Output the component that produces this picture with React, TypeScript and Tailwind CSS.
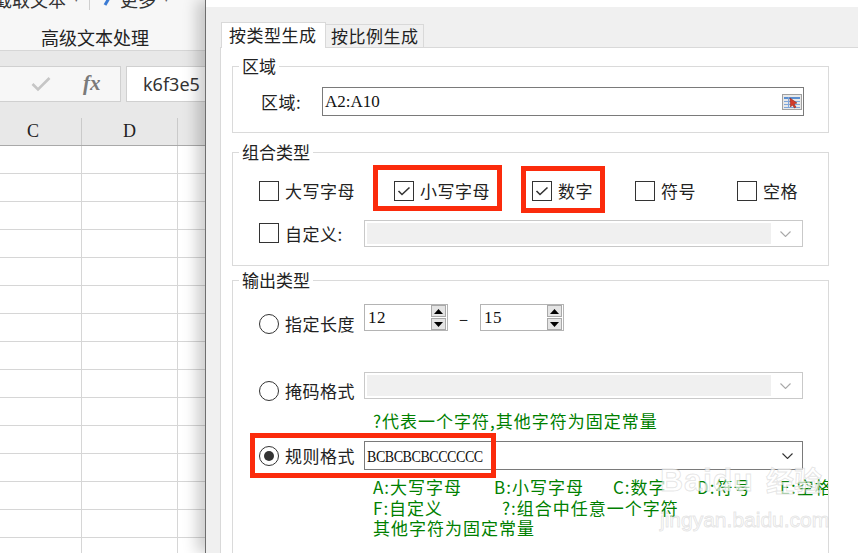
import React from "react";

const Check = ({ checked = false }: { checked?: boolean }) => (
  <span className="w-[20px] h-[20px] shrink-0 border border-[#333] bg-white flex items-center justify-center">
    {checked && (
      <svg width="14" height="12" viewBox="0 0 14 12">
        <path d="M1.5 6 L5 9.5 L12.5 2.5" stroke="#333" strokeWidth="1.6" fill="none" />
      </svg>
    )}
  </span>
);

const Radio = ({ checked = false }: { checked?: boolean }) => (
  <span className="w-[20px] h-[20px] shrink-0 rounded-full border border-[#333] bg-white flex items-center justify-center">
    {checked && <span className="w-[10px] h-[10px] rounded-full bg-[#333]" />}
  </span>
);

const Chevron = ({ color }: { color: string }) => (
  <svg width="11" height="6" viewBox="0 0 11 6">
    <path d="M0.5 0.5 L5.5 5.5 L10.5 0.5" stroke={color} strokeWidth="1.1" fill="none" />
  </svg>
);

const Spin = ({ value }: { value: string }) => (
  <div className="w-[84px] h-[27px] shrink-0 border border-[#b4b4b4] bg-white flex items-center pl-[3px] pr-[1px]">
    <span className="flex-1 text-[17px] font-['Liberation_Serif',serif] text-[#111]">{value}</span>
    <div className="flex flex-col gap-[1px]">
      <div className="w-[15px] h-[12px] border border-[#a9a9a9] bg-[#e4e4e4] flex items-center justify-center">
        <svg width="9" height="5" viewBox="0 0 9 5">
          <path d="M0 5 L4.5 0 L9 5Z" fill="#000" />
        </svg>
      </div>
      <div className="w-[15px] h-[12px] border border-[#a9a9a9] bg-[#e4e4e4] flex items-center justify-center">
        <svg width="9" height="5" viewBox="0 0 9 5">
          <path d="M0 0 L4.5 5 L9 0Z" fill="#000" />
        </svg>
      </div>
    </div>
  </div>
);

const DisabledCombo = () => (
  <div className="flex-1 min-w-0 h-[27px] border border-[#c9c9c9] bg-white flex items-center p-[2px]">
    <div className="h-full flex-1 bg-[#f0f0f0]" />
    <div className="w-[29px] flex justify-center">
      <Chevron color="#a8a8a8" />
    </div>
  </div>
);

const Group = ({ title, className, children }: { title: string; className: string; children: React.ReactNode }) => (
  <fieldset className={className}>
    <legend className="ml-[6px] px-[3px] text-[17px] leading-[20px] text-[#222]">{title}</legend>
    {children}
  </fieldset>
);

const RangeIcon = () => (
  <svg width="20" height="16" viewBox="0 0 20 16">
    <rect x="0.5" y="0.5" width="19" height="15" fill="#e8e8e8" stroke="#a0a0a0" />
    <rect x="2" y="3" width="16" height="2" fill="#5b8fd0" />
    <rect x="2" y="7" width="16" height="1" fill="#7fa6da" />
    <rect x="2" y="10" width="16" height="1" fill="#7fa6da" />
    <rect x="2" y="13" width="16" height="1" fill="#7fa6da" />
    <rect x="6" y="3" width="1" height="11" fill="#7fa6da" />
    <path d="M8 4 L15 9 L12 10 L14 13 L12.5 14 L10.5 11 L8.5 13 Z" fill="#d23a2a" stroke="#8a1f14" strokeWidth="0.5" />
  </svg>
);

const rows = Array.from({ length: 15 }, (_, i) => i);

export default function App() {
  return (
    <div className="relative w-[858px] h-[553px] overflow-hidden flex bg-white font-['Noto_Sans_CJK_SC','Noto_Sans',sans-serif]">
      {/* spreadsheet behind the dialog */}
      <div className="w-[205px] shrink-0 flex flex-col">
        <div className="h-[51px] shrink-0 bg-[#f7f7f7] border-b border-[#d6d6d6] overflow-hidden">
          <div className="h-[11px] overflow-hidden">
            <div className="flex items-center -mt-[12px] h-[22px] text-[18px] leading-[20px] text-[#333]">
              <span className="-ml-[6px]">截取文本</span>
              <span className="ml-[8px] text-[9px] text-[#666]">▾</span>
              <span className="ml-[10px] w-px h-[22px] bg-[#cfcfcf]" />
              <span className="ml-[17px] w-[3px] h-[14px] bg-[#3b7bd4] rotate-[30deg]" />
              <span className="ml-[10px]">更多</span>
              <span className="ml-[8px] text-[9px] text-[#666]">▾</span>
            </div>
          </div>
          <div className="mt-[14px] pl-[41px] text-[18px] leading-[24px] text-[#222]">高级文本处理</div>
        </div>
        <div className="h-[67px] shrink-0 bg-[#e8e8e8] flex pt-[15px]">
          <div className="w-[121px] h-[36px] bg-[#f7f7f7] border border-l-0 border-[#d0d0d0] flex items-center">
            <svg className="ml-[31px]" width="20" height="16" viewBox="0 0 20 16">
              <path d="M1.5 8 L7 13.5 L18.5 2" stroke="#c6c6c6" strokeWidth="2.6" fill="none" />
            </svg>
            <span className="ml-[32px] text-[21px] italic font-bold font-['Liberation_Serif',serif] text-[#7a7a7a]">fx</span>
          </div>
          <div className="ml-[5px] flex-1 h-[36px] bg-white border border-r-0 border-[#d0d0d0] flex items-center pl-[16px] text-[18px] text-[#333] font-['Noto_Sans',sans-serif]">
            k6f3e5
          </div>
        </div>
        <div className="h-[28px] shrink-0 bg-[#e8e8e8] border-b border-[#a9a9a9] flex text-[18px] font-['Liberation_Serif',serif] text-[#222]">
          <div className="w-[82px] border-r border-[#cacaca] flex items-center pl-[27px]">C</div>
          <div className="w-[96px] border-r border-[#cacaca] flex items-center justify-center">D</div>
          <div className="flex-1" />
        </div>
        {rows.map((r) => (
          <div key={r} className="h-[28px] shrink-0 border-b border-[#d6d6d6] flex">
            <div className="w-[82px] border-r border-[#d6d6d6]" />
            <div className="w-[96px] border-r border-[#d6d6d6]" />
            <div className="flex-1" />
          </div>
        ))}
      </div>

      {/* dialog */}
      <div className="relative z-10 flex-1 min-w-0 flex flex-col border-l border-[#6e6e6e] bg-[#f0f0f0] shadow-[-8px_0_14px_rgba(0,0,0,0.2)]">
        <div className="h-[7px] shrink-0 bg-white" />
        <div className="flex-1 flex flex-col pl-[14px]">
          <div className="h-[40px] shrink-0 flex items-end">
            <div className="relative z-10 ml-[1px] -mb-px w-[105px] h-[26px] bg-white border border-b-0 border-[#d9d9d9] pl-[7px] text-[17px] leading-[24px] tracking-[0.5px] text-[#222]">
              按类型生成
            </div>
            <div className="w-[98px] h-[23px] bg-[#f0f0f0] border border-l-0 border-b-0 border-[#d9d9d9] pl-[5px] text-[17px] leading-[22px] tracking-[0.5px] text-[#222]">
              按比例生成
            </div>
          </div>
          <div className="flex-1 min-w-0 bg-white border-t border-l border-[#d9d9d9] pl-[11px] pr-[29px] text-[#222]">
            <Group title="区域" className="mt-[8px] min-w-0 border border-[#dadada]">
              <div className="pt-[11px] pb-[16px] pl-[28px] pr-[24px] flex items-center">
                <span className="w-[61px] text-[17px] tracking-[0.5px]">区域:</span>
                <div className="flex-1 min-w-0 h-[29px] border border-[#7a7a7a] flex items-center pl-[2px] pr-[1px]">
                  <span className="flex-1 text-[17px] font-['Liberation_Serif',serif] text-[#111]">A2:A10</span>
                  <RangeIcon />
                </div>
              </div>
            </Group>

            <Group title="组合类型" className="mt-[9px] min-w-0 border border-[#dadada]">
              <div className="pt-[15px] pb-[18px] pl-[26px] pr-[25px]">
                <div className="h-[28px] flex items-center text-[17px] tracking-[0.5px]">
                  <div className="w-[135px] flex items-center gap-[6px]">
                    <Check />
                    <span>大写字母</span>
                  </div>
                  <div className="w-[138px] flex items-center gap-[6px]">
                    <Check checked />
                    <span>小写字母</span>
                  </div>
                  <div className="w-[103px] flex items-center gap-[6px]">
                    <Check checked />
                    <span>数字</span>
                  </div>
                  <div className="w-[102px] flex items-center gap-[6px]">
                    <Check />
                    <span>符号</span>
                  </div>
                  <div className="flex items-center gap-[6px]">
                    <Check />
                    <span>空格</span>
                  </div>
                </div>
                <div className="mt-[15px] flex items-end text-[17px] tracking-[0.5px]">
                  <div className="w-[105px] flex items-center gap-[6px] mb-[1px]">
                    <Check />
                    <span>自定义:</span>
                  </div>
                  <DisabledCombo />
                </div>
              </div>
            </Group>

            <Group title="输出类型" className="mt-[4px] min-w-0 border border-[#dadada] h-[320px] overflow-hidden">
              <div className="pt-[14px] pl-[26px] pr-[25px] text-[17px] tracking-[0.5px]">
                <div className="h-[27px] flex items-start">
                  <div className="w-[105px] mt-[7px] flex items-center gap-[6px]">
                    <Radio />
                    <span>指定长度</span>
                  </div>
                  <Spin value="12" />
                  <span className="ml-[11px] mr-[12px] w-[9px] leading-[27px] text-center">–</span>
                  <Spin value="15" />
                </div>

                <div className="mt-[41px] h-[28px] flex items-start">
                  <div className="w-[105px] mt-[6px] flex items-center gap-[6px]">
                    <Radio />
                    <span>掩码格式</span>
                  </div>
                  <DisabledCombo />
                </div>
                <div className="mt-[11px] pl-[114px] leading-[20px] tracking-[1px] text-[#008000]">
                  ?代表一个字符,其他字符为固定常量
                </div>

                <div className="mt-[10px] flex items-center">
                  <div className="w-[105px] flex items-center gap-[6px]">
                    <Radio checked />
                    <span>规则格式</span>
                  </div>
                  <div className="flex-1 min-w-0 h-[29px] border border-[#7a7a7a] bg-white flex items-center pl-[2px]">
                    <span className="flex-1 min-w-0">
                      <span className="inline-block origin-left scale-x-[0.875] text-[16px] tracking-[-0.5px] font-['Liberation_Serif',serif] text-[#111]">
                        BCBCBCBCCCCCC
                      </span>
                    </span>
                    <div className="w-[29px] flex justify-center">
                      <Chevron color="#333" />
                    </div>
                  </div>
                </div>
                <div className="mt-[7px] pl-[114px] leading-[20.5px] tracking-[1px] text-[#008000] whitespace-nowrap overflow-hidden -mr-[25px]">
                  <div>
                    <span className="inline-block w-[121px]">A:大写字母</span>
                    <span className="inline-block w-[119px]">B:小写字母</span>
                    <span className="inline-block w-[84px]">C:数字</span>
                    <span className="inline-block w-[83px]">D:符号</span>
                    <span>E:空格</span>
                  </div>
                  <div>
                    <span className="inline-block w-[129px]">F:自定义</span>
                    <span>?:组合中任意一个字符</span>
                  </div>
                  <div>其他字符为固定常量</div>
                </div>
              </div>
            </Group>
          </div>
        </div>
      </div>

      {/* red annotation boxes */}
      <div className="absolute z-20 left-[373px] top-[165px] w-[129px] h-[46px] border-[5px] border-[#fb2b0c] pointer-events-none" />
      <div className="absolute z-20 left-[521px] top-[166px] w-[84px] h-[47px] border-[5px] border-[#fb2b0c] pointer-events-none" />
      <div className="absolute z-20 left-[250px] top-[433px] w-[246px] h-[45px] border-[5px] border-[#fb2b0c] pointer-events-none" />

      {/* watermark */}
      <div className="absolute z-20 left-[660px] top-[462px] pointer-events-none text-[rgba(255,255,255,0.7)] [-webkit-text-stroke:1px_rgba(170,170,170,0.3)] font-['Liberation_Sans',sans-serif]">
        <div className="flex items-end leading-[36px]">
          <span className="text-[32px] font-bold tracking-[1px]">Baidu</span>
          <span className="ml-[12px] text-[28px] font-bold font-['Noto_Sans_CJK_SC',sans-serif]">经验</span>
        </div>
        <div className="text-[21px] leading-[24px] mt-[10px]">jingyan.baidu.com</div>
      </div>
    </div>
  );
}
